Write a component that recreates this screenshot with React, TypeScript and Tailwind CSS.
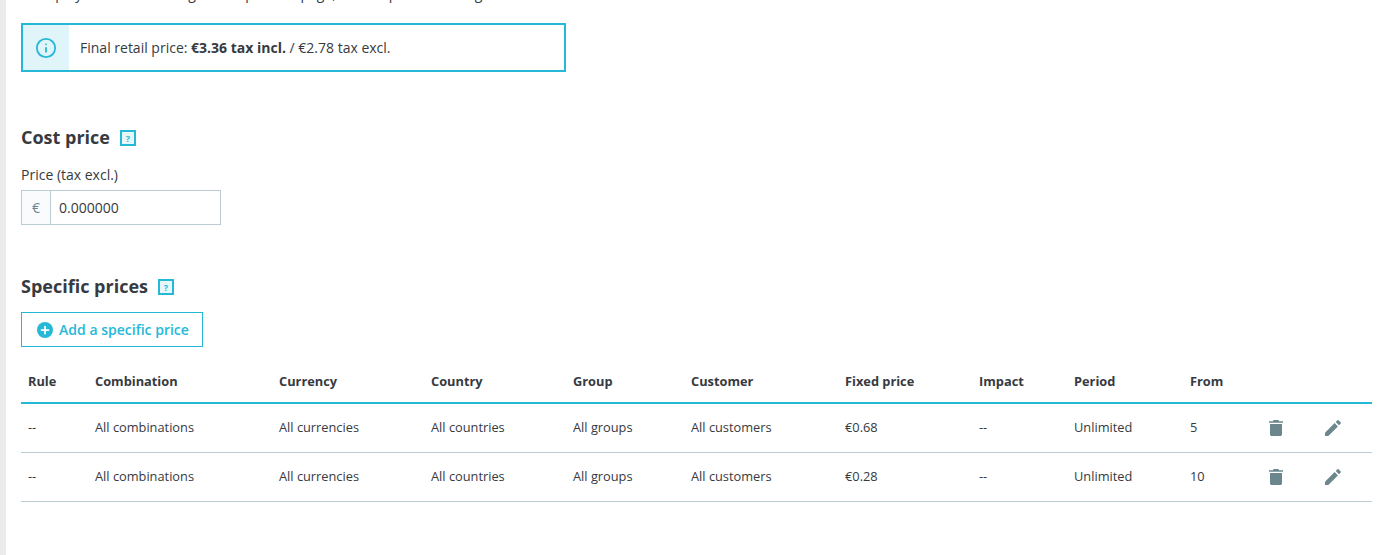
import { Info, Plus } from 'lucide-react'

const headers = [
  { label: 'Rule', width: 'w-[67px]' },
  { label: 'Combination', width: 'w-[184px]' },
  { label: 'Currency', width: 'w-[152px]' },
  { label: 'Country', width: 'w-[142px]' },
  { label: 'Group', width: 'w-[118px]' },
  { label: 'Customer', width: 'w-[154px]' },
  { label: 'Fixed price', width: 'w-[134px]' },
  { label: 'Impact', width: 'w-[95px]' },
  { label: 'Period', width: 'w-[116px]' },
  { label: 'From', width: 'w-[77px]' },
  { label: '', width: 'w-[57px]' },
  { label: '', width: 'w-[55px]' },
]

const rows = [
  { price: '€0.68', from: '5' },
  { price: '€0.28', from: '10' },
]

function HelpBox() {
  return (
    <span className="mt-[5px] flex h-4 w-4 items-center justify-center self-start border-2 border-[#25b9d7] bg-[#e6f7fa] text-[9px] font-bold leading-none text-[#25b9d7]">
      ?
    </span>
  )
}

function TrashIcon() {
  return (
    <svg width="14" height="16" viewBox="0 0 14 16" className="fill-[#6c868e]">
      <path d="M4.500 0h5l.5 1.200H14v1.600H0V1.200h4z" />
      <path d="M1 4h12v10.200c0 1-.8 1.800-1.800 1.800H2.800C1.800 16 1 15.200 1 14.200z" />
    </svg>
  )
}

function PencilIcon() {
  return (
    <svg width="16" height="16" viewBox="0 0 16 16" className="fill-[#6c868e]">
      <path d="M0 12.700V16h3.300L12.900 6.400 9.600 3.100z" />
      <path d="M15.700 3.600a.9.9 0 0 0 0-1.200L13.600.3a.9.9 0 0 0-1.200 0l-1.700 1.700L14 5.300z" />
    </svg>
  )
}

export default function App() {
  return (
    <div className="h-[555px] w-[1381px] overflow-hidden bg-white font-['Open_Sans',sans-serif] text-[#363a41]">
      <div className="flex h-full">
        <div className="w-[6px] shrink-0 bg-[#eaebec]" />
        <main className="flex-1 pl-[15px] pr-[9px]">
          {/* checkbox label, scrolled mostly out of view */}
          <p className="-mt-[16px] h-[19px] pl-[14px] text-[14px] leading-[19px] whitespace-nowrap">
            Display the "on sale" flag on the product page, and on product listings.
          </p>

          <div className="mt-[20px] flex h-[49px] w-[545px] border-2 border-[#25b9d7]">
            <div className="flex w-[46px] items-center justify-center bg-[#e0f5f9]">
              <Info size={22} strokeWidth={2} className="text-[#25b9d7]" />
            </div>
            <p className="flex items-center pl-[11px] text-[14px]">
              <span>
                Final retail price: <strong className="font-bold">€3.36 tax incl.</strong> / €2.78 tax excl.
              </span>
            </p>
          </div>

          <div className="mt-[53px] flex items-center gap-[10px]">
            <h2 className="text-[18px] font-bold leading-6">Cost price</h2>
            <HelpBox />
          </div>

          <label className="mt-[16px] block text-[14px] leading-[19px]">Price (tax excl.)</label>
          <div className="mt-[6px] flex h-[35px] w-[200px] border border-[#bbcdd2] text-[14px]">
            <span className="flex w-[29px] items-center justify-center border-r border-[#bbcdd2] bg-[#fafbfc] text-[#6c868e]">
              €
            </span>
            <span className="flex items-center pl-[8px]">0.000000</span>
          </div>

          <div className="mt-[49px] flex items-center gap-[10px]">
            <h2 className="text-[18px] font-bold leading-6">Specific prices</h2>
            <HelpBox />
          </div>

          <button className="mt-[14px] flex h-[35px] w-[182px] items-center justify-center gap-[6px] border border-[#25b9d7] pl-[2px] text-[14px] font-semibold text-[#25b9d7]">
            <span className="flex h-4 w-4 items-center justify-center rounded-full bg-[#25b9d7]">
              <Plus size={12} strokeWidth={3.5} className="text-white" />
            </span>
            Add a specific price
          </button>

          <table className="mt-[15px] w-[1351px] table-fixed text-[12.8px]">
            <thead>
              <tr className="h-[41px] border-b-2 border-[#25b9d7]">
                {headers.map((h, i) => (
                  <th key={i} className={`${h.width} pl-[7px] text-left font-bold`}>
                    {h.label}
                  </th>
                ))}
              </tr>
            </thead>
            <tbody>
              {rows.map((r) => (
                <tr key={r.from} className="h-[49px] border-b border-[#bbcdd2]">
                  <td className="pl-[7px]">--</td>
                  <td className="pl-[7px]">All combinations</td>
                  <td className="pl-[7px]">All currencies</td>
                  <td className="pl-[7px]">All countries</td>
                  <td className="pl-[7px]">All groups</td>
                  <td className="pl-[7px]">All customers</td>
                  <td className="pl-[7px]">{r.price}</td>
                  <td className="pl-[7px]">--</td>
                  <td className="pl-[7px]">Unlimited</td>
                  <td className="pl-[7px]">{r.from}</td>
                  <td className="pl-[7px]">
                    <span className="ml-[2px] block w-[14px]">
                      <TrashIcon />
                    </span>
                  </td>
                  <td className="pl-[7px]">
                    <span className="ml-[1px] block w-4">
                      <PencilIcon />
                    </span>
                  </td>
                </tr>
              ))}
            </tbody>
          </table>
        </main>
      </div>
    </div>
  )
}
